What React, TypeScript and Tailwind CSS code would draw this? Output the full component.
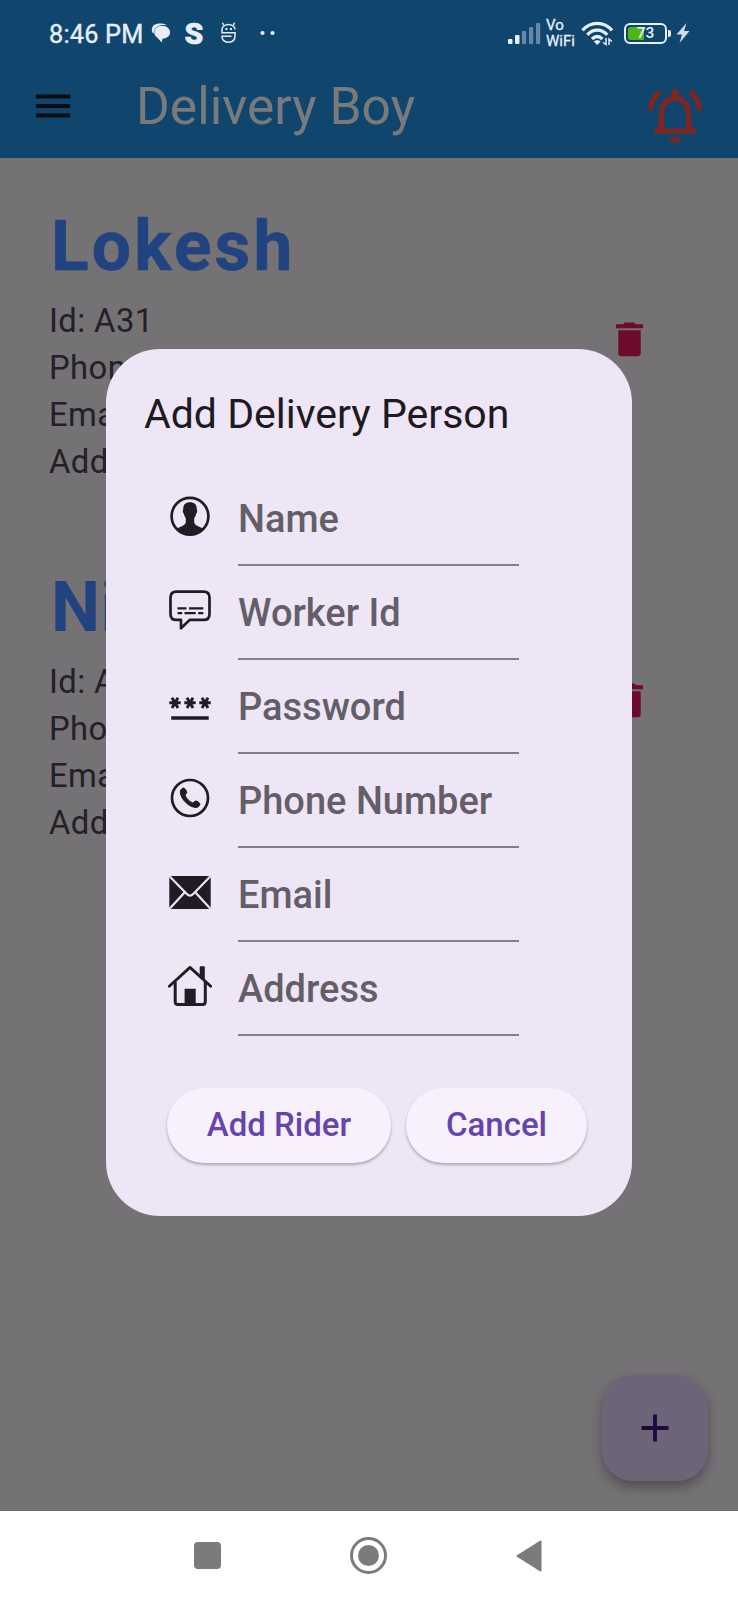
import type { ReactNode } from "react";

const INK = "#1f1c24";

function MenuIcon() {
  return (
    <svg width="35" height="24" viewBox="0 0 35 24" stroke="#0a0c10" strokeWidth="4">
      <path d="M0 2.500H34.300M0 12H34.300M0 21.500H34.300" />
    </svg>
  );
}

function BellIcon() {
  return (
    <svg width="56" height="56" viewBox="0 0 56 56" fill="none" stroke="#80261f" strokeWidth="5.2">
      <path d="M14.500 42.500V25.500C14.500 17 20 10.500 28 10.500S41.500 17 41.500 25.500V42.500" />
      <path d="M7.500 43H48.500" strokeWidth="5" />
      <path d="M9 42L13.500 37V42ZM47 42L42.500 37V42Z" strokeWidth="2" />
      <path d="M28 4.500V9" strokeWidth="7.500" strokeLinecap="round" />
      <path d="M3.300 22.500C3.800 14.500 7.500 8 13 3.500M52.700 22.500C52.200 14.500 48.500 8 43 3.500" />
      <path d="M22 49.500H34C33.500 53 31 55 28 55S22.500 53 22 49.500Z" fill="#80261f" stroke="none" />
    </svg>
  );
}

function TrashIcon() {
  return (
    <svg width="27" height="35" viewBox="0 0 27 35" fill="#6e0b2c">
      <path d="M0 2.300H7L9 0.500H18L20 2.300H27V6.200H0Z" />
      <path d="M2.300 8.300H24.700V31.500Q24.700 34.300 21.900 34.300H5.100Q2.300 34.300 2.300 31.500Z" />
    </svg>
  );
}

function PersonIcon() {
  return (
    <svg width="44" height="44" viewBox="0 0 44 44">
      <circle cx="22" cy="22.300" r="18.400" fill="none" stroke={INK} strokeWidth="2.700" />
      <path
        d="M22 8.200C26.800 8.200 29 10.900 28.700 15.300C29.500 16 29.300 18.800 28.200 19.500C27.800 21.700 27 23 26.200 24V28.500C26.900 31.500 31.500 32.500 35 34.500C31.500 38.800 27 41 22 41S12.500 38.800 9 34.500C12.500 32.500 17.100 31.500 17.800 28.500V24C17 23 16.200 21.700 15.800 19.500C14.700 18.800 14.500 16 15.300 15.300C15 10.900 17.200 8.200 22 8.200Z"
        fill={INK}
      />
    </svg>
  );
}

function MessageIcon() {
  return (
    <svg width="44" height="44" viewBox="0 0 44 44" fill="none" stroke={INK}>
      <path
        d="M8.500 3.600H35.500Q41.500 3.600 41.500 9.600V25.900Q41.500 31.900 35.500 31.900H21.700L13 40.300V31.900H8.500Q2.500 31.900 2.500 25.900V9.600Q2.500 3.600 8.500 3.600Z"
        strokeWidth="2.700"
        strokeLinejoin="round"
      />
      <path d="M9.500 20.300H18.500M21 20.300H35.300M9.500 25.200H14.200M16.500 25.200H27.700M30.200 25.200H35.300" strokeWidth="2.200" />
    </svg>
  );
}

function PasswordIcon() {
  return (
    <svg width="44" height="44" viewBox="0 0 44 44" fill="none" stroke={INK}>
      {[7, 22, 37].map((x) => (
        <path
          key={x}
          transform={`translate(${x} 20.800)`}
          d="M-5.700 0H5.700M-3 -5.100L3 5.100M3 -5.100L-3 5.100"
          strokeWidth="2.900"
        />
      ))}
      <path d="M3.200 35.900H40.700" strokeWidth="3.500" />
    </svg>
  );
}

function PhoneIcon() {
  return (
    <svg width="44" height="44" viewBox="0 0 44 44">
      <circle cx="22" cy="22" r="18" fill="none" stroke={INK} strokeWidth="2.700" />
      <path
        d="M15.300 12C17 11.800 18.600 15 18.700 16.500C18.700 17.800 17.200 18.200 17.300 19.400C18 22.300 21.500 25.700 24.500 26.800C25.800 27.100 26.200 25.100 27.600 25C29.200 25 32 26.800 31.900 28.200C31.700 30 29.800 31.600 27.800 31.500C20.800 31 12.900 23.500 12.300 16.300C12.200 14.300 13.600 12.200 15.300 12Z"
        fill={INK}
        stroke={INK}
        strokeWidth="1"
      />
    </svg>
  );
}

function MailIcon() {
  return (
    <svg width="44" height="44" viewBox="0 0 44 44">
      <rect x="1.300" y="5.900" width="41.400" height="33" rx="2.500" fill={INK} />
      <path
        d="M2 6.800L18.800 24Q22 27.200 25.200 24L42 6.800M2 38.300L17 22M42 38.300L27 22"
        fill="none"
        stroke="#eee6f7"
        strokeWidth="2.200"
      />
    </svg>
  );
}

function HomeIcon() {
  return (
    <svg width="44" height="44" viewBox="0 0 44 44" fill="none" stroke={INK}>
      <path d="M1.300 22.200L22 3.400L42.700 22.200" strokeWidth="2.800" strokeLinecap="round" strokeLinejoin="round" />
      <path d="M7.200 18V37.800Q7.200 40.500 9.900 40.500H34.600Q37.300 40.500 37.300 37.800V18" strokeWidth="3" />
      <path d="M16.600 24.800H27.700V40.800H16.600ZM31.700 3.100Q31.700 2.300 32.500 2.300H36Q36.800 2.300 36.800 3.100V17.300L31.700 12.800Z" fill={INK} stroke="none" />
    </svg>
  );
}

function StatusBar() {
  return (
    <div className="flex h-[66px] items-center justify-between pr-[48px] pl-[49px] text-[#e6eefa]">
      <div className="flex items-center">
        <span className="w-[102px] pt-[3px] text-[25.300px] leading-[66px] tracking-[0.200px] whitespace-nowrap [-webkit-text-stroke:0.400px]">8:46 PM</span>
        <svg width="21" height="22" viewBox="0 0 22 22" fill="currentColor">
          <path d="M11.500 3.500C16.500 3.500 20 6.500 20 10.500C20 14 16.500 16.800 12 17L11.300 21L6.500 15.800C4.500 14.500 3.500 12.800 3.500 10.500C3.500 6.500 7 3.500 11.500 3.500Z" />
          <path d="M1.800 11C-0.500 7 1.500 2.500 5.500 1.500C10 0.500 14.500 1 16.500 2.700C9 1.800 3.300 4 2.800 11.500Z" />
        </svg>
        <span className="ml-[11px] w-[22px] pt-[1px] text-center text-[30px] leading-[60px] font-black [-webkit-text-stroke:0.600px]">S</span>
        <svg className="ml-[15px]" width="17" height="22" viewBox="0 0 17 22" fill="none" stroke="currentColor" strokeWidth="1.500">
          <path d="M15 7.500C15 4.500 12 2.500 8.500 2.500S2 4.500 2 7.500V10.800H15V14C15 18 12.500 20.200 8.500 20.200S2 18 2 14.300H11.500M3.500 3L2.500 0.800M13.500 3L14.500 0.800" />
          <path d="M5.500 7H7.500M10 7H12" strokeWidth="2" />
        </svg>
        <svg className="ml-[22px]" width="16" height="6" viewBox="0 0 16 6" fill="currentColor">
          <circle cx="3.500" cy="3" r="2.100" />
          <circle cx="13.500" cy="3" r="2.100" />
        </svg>
      </div>
      <div className="flex items-center">
        <svg width="34" height="24" viewBox="0 0 34 24" fill="currentColor">
          <rect x="1" y="18" width="4.500" height="5" rx="1" />
          <rect x="8" y="14" width="4.500" height="9" rx="1" />
          <g opacity="0.400">
            <rect x="15" y="10" width="4.200" height="13" rx="1" />
            <rect x="22" y="6" width="4.200" height="17" rx="1" />
            <rect x="29" y="2" width="4.200" height="21" rx="1" />
          </g>
        </svg>
        <div className="ml-[5px] flex w-[30px] flex-col text-[15px] leading-[16px] [-webkit-text-stroke:0.300px]">
          <span>Vo</span>
          <span>WiFi</span>
        </div>
        <svg className="ml-[5px]" width="33" height="26" viewBox="0 0 33 26" fill="none" stroke="currentColor" strokeWidth="3.300">
          <path d="M1.500 10.300C9.500 1 23 1 31 10.300M6.300 14.800C12 8.500 20.500 8.500 26.200 14.800M11 19C14.300 15.800 18.200 15.800 21.500 19" />
          <path d="M12.800 21.500Q16.200 18.500 19.700 21.500L16.200 25Z" fill="currentColor" stroke="none" />
          <path d="M22 22.500L25 24.500V18M28 25V19L31 21.500" strokeWidth="1.500" />
        </svg>
        <div className="ml-[10px] flex h-[21px] w-[43px] items-center rounded-[6px] border-2 border-[#e6eefa] p-[2px]">
          <div className="flex h-[13px] w-[35px] items-center justify-center rounded-[3px] bg-[linear-gradient(90deg,#4fb514_46%,transparent_46%)] pt-px text-[15.500px] leading-[13px] font-medium">73</div>
        </div>
        <div className="ml-[1px] h-[7px] w-[3px] rounded-r-[2px] bg-[#e6eefa]" />
        <svg className="ml-[5px]" width="14" height="20" viewBox="0 0 14 20" fill="#cfdcec">
          <path d="M10.500 0L0.500 11.500H6L3.500 20L13.500 8H8Z" />
        </svg>
      </div>
    </div>
  );
}

interface Rider {
  name: string;
  id: string;
  nameClass: string;
}

const riders: Rider[] = [
  { name: "Lokesh", id: "A31", nameClass: "tracking-[3.200px] [-webkit-text-stroke:0.600px_#21437f]" },
  { name: "Nikhil", id: "A32", nameClass: "tracking-[0.500px]" },
];

function RiderCard({ rider }: { rider: Rider }) {
  return (
    <section className="flex h-[361px] items-start justify-between pr-[95px] pl-[49px]">
      <div>
        <h2 className={`pt-[2px] pl-[2px] text-[69.500px] leading-[80px] font-bold text-[#21437f] ${rider.nameClass}`}>{rider.name}</h2>
        <div className="mt-[11px] text-[32.800px] leading-[47px] tracking-[0.400px] text-[#232027]">
          <p>Id: {rider.id}</p>
          <p>Phone</p>
          <p>Email</p>
          <p>Address</p>
        </div>
      </div>
      <div className="mt-[116.500px]">
        <TrashIcon />
      </div>
    </section>
  );
}

const fields: { label: string; icon: ReactNode }[] = [
  { label: "Name", icon: <PersonIcon /> },
  { label: "Worker Id", icon: <MessageIcon /> },
  { label: "Password", icon: <PasswordIcon /> },
  { label: "Phone Number", icon: <PhoneIcon /> },
  { label: "Email", icon: <MailIcon /> },
  { label: "Address", icon: <HomeIcon /> },
];

function AddRiderDialog() {
  return (
    <div role="dialog" className="absolute top-[349px] left-[106px] h-[867px] w-[526px] rounded-[54px] bg-[#eee6f7] pt-[38px]">
      <h3 className="pt-px pl-[38px] text-[41px] leading-[53px] whitespace-nowrap text-[#1d1a21]">Add Delivery Person</h3>
      <div className="mt-[31px] pl-[62px]">
        {fields.map((f) => (
          <div key={f.label} className="flex h-[94px] items-start">
            <div className="w-[69.500px] pt-[22px]">{f.icon}</div>
            <div className="h-[94px] w-[281.500px] border-b-2 border-[#857b8d] pt-px pl-[0.500px] text-[38px] leading-[92px] font-medium whitespace-nowrap text-[#635e68]">
              {f.label}
            </div>
          </div>
        ))}
      </div>
      <div className="mt-[52px] flex gap-[15px] pl-[61px] text-[33px] font-medium text-[#6544ad]">
        <button className="h-[75px] w-[224px] rounded-full bg-[#f7f1fd] pb-[2px] shadow-[0_2px_3px_rgba(0,0,0,0.280)]">Add Rider</button>
        <button className="h-[75px] w-[181px] rounded-full bg-[#f7f1fd] pb-[2px] shadow-[0_2px_3px_rgba(0,0,0,0.280)]">Cancel</button>
      </div>
    </div>
  );
}

export default function App() {
  return (
    <div className="relative flex h-[1600px] w-[738px] flex-col overflow-hidden bg-[#757275] font-[Roboto,sans-serif]">
      <header className="h-[158px] shrink-0 bg-[#10456e]">
        <StatusBar />
        <div className="flex h-[80px] items-center pr-[35px] pl-[36px]">
          <MenuIcon />
          <h1 className="ml-[65px] flex-1 pt-[2px] text-[51.600px] leading-[80px] whitespace-nowrap text-[#797a7c]">Delivery Boy</h1>
          <div className="pt-[20px]">
            <BellIcon />
          </div>
        </div>
      </header>
      <main className="flex-1 pt-[47px]">
        {riders.map((r) => (
          <RiderCard key={r.name} rider={r} />
        ))}
      </main>
      <nav className="flex h-[89px] shrink-0 items-center bg-white pl-[194px]">
        <div className="size-[27px] rounded-[4px] bg-[#7b7b7b]" />
        <div className="ml-[129px] flex size-[37px] items-center justify-center rounded-full border-3 border-[#7b7b7b]">
          <div className="size-[21px] rounded-full bg-[#7b7b7b]" />
        </div>
        <svg className="ml-[129px]" width="26" height="32" viewBox="0 0 26 32" fill="#7b7b7b" stroke="#7b7b7b" strokeWidth="2" strokeLinejoin="round">
          <path d="M1.500 16L24.500 1.500V30.500Z" />
        </svg>
      </nav>
      <button className="absolute top-[1375px] left-[602px] flex size-[106px] items-center justify-center rounded-[31px] bg-[#6d6577] shadow-[0_6px_12px_rgba(0,0,0,0.320)]">
        <svg width="28" height="28" viewBox="0 0 28 28" stroke="#1b0a40" strokeWidth="3.800">
          <path d="M14 0.500V27.500M0.500 14H27.500" />
        </svg>
      </button>
      <AddRiderDialog />
    </div>
  );
}
